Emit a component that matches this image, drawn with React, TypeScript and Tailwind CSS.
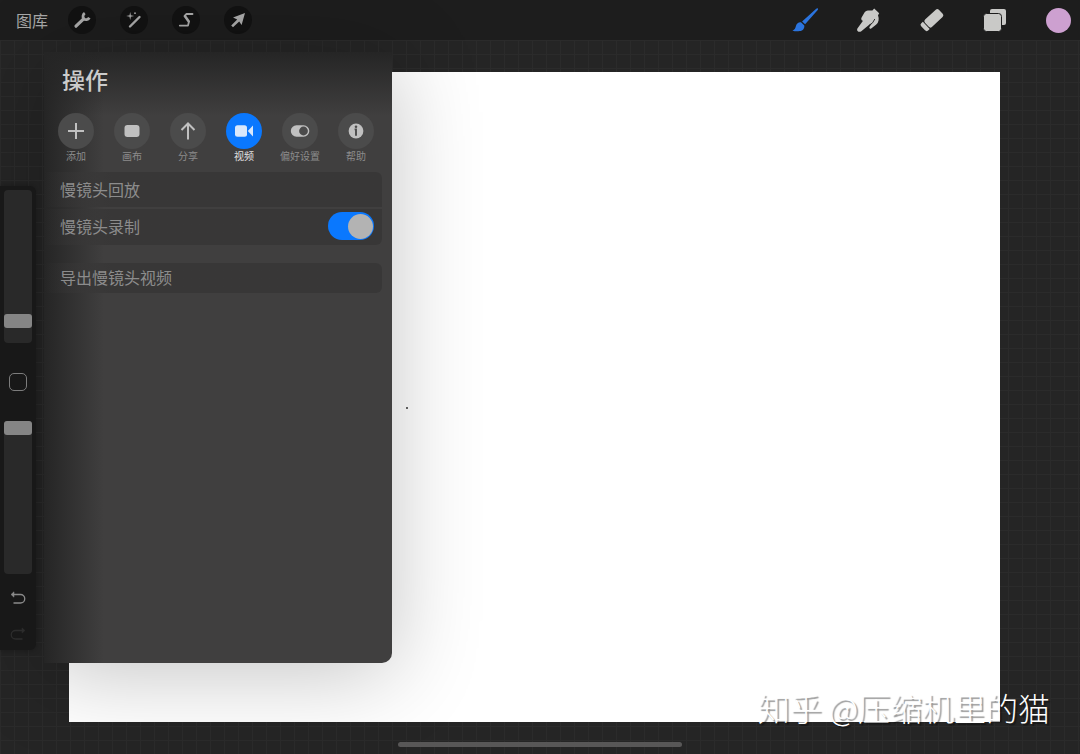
import { useState, type ReactNode } from 'react';

const WrenchIcon = () => (
  <svg viewBox="0 0 20 20" className="h-5 w-5" fill="none" stroke="currentColor">
    <path d="M4 16.2 11.6 8.800" strokeWidth="3.200" strokeLinecap="round" />
    <path d="M12.800 3.200c-2 1.400-2.400 4-1 5.500 1.500 1.500 4.200 1.200 5.600-.9" strokeWidth="2.800" />
  </svg>
);

const WandIcon = () => (
  <svg viewBox="0 0 20 20" className="h-5 w-5" fill="currentColor">
    <path d="M6 16.500 15.500 7" stroke="currentColor" strokeWidth="2.400" strokeLinecap="round" />
    <path d="M6.200 2 6.900 5.300l3.300.7-3.300.7-.7 3.300-.7-3.300L2.200 6l3.300-.7Z" />
    <circle cx="11" cy="3.200" r="0.900" />
  </svg>
);

const SelectIcon = () => (
  <svg viewBox="0 0 20 20" className="h-5 w-5" fill="none" stroke="currentColor" strokeLinecap="round" strokeLinejoin="round">
    <path d="M16.500 4H10.500L8.600 5.800" strokeWidth="1.800" />
    <path d="M9 6.200 12.600 11.200" strokeWidth="2.600" />
    <path d="M13 11.500 12 15.600H3.800" strokeWidth="1.800" />
  </svg>
);

const TransformIcon = () => (
  <svg viewBox="0 0 20 20" className="h-5 w-5" fill="currentColor">
    <path d="M17 3 13.600 15 11.200 11.400 5 17.200 3.200 15.400 9.200 9.400 5 7.600Z" />
  </svg>
);

const BrushIcon = () => (
  <svg viewBox="0 0 28 26" className="h-[26px] w-7" fill="currentColor">
    <path d="M25.800 1.400c.5.500.3.900-.1 1.500L13.100 17.200l-3-2.700L24.200 1.700c.6-.5 1.100-.7 1.600-.3Z" />
    <path d="m9 15.300 3.300 3.100c.4 2.700-1.200 5.200-4.700 5.700-2.800.4-5.400.1-7.200-.7 2.700-.7 2.800-2.200 3.600-4.700.8-2.300 2.700-3.800 5-3.400Z" />
  </svg>
);

const SmudgeIcon = () => (
  <svg viewBox="0 0 26 26" className="h-[26px] w-[26px]" fill="currentColor">
    <path d="M18.200 1.600 23.200 6.200 22 8.200C23.400 12 22.800 15.500 20 17.800L15.200 21.400C13.900 22.200 12.800 21 13.600 19.800L15.800 16.400 13.200 17.800 5 24.400C3 25.800.2 23.800 1.400 21.400L7 13.800C5.400 13.400 4.800 11.800 5.600 10.400L8.200 6C9 4.400 10.400 3.800 12 3.600L16.400 3.600Z" />
    <path d="m13.200 18.200 3.400-2.400 2.200-3.800" fill="none" stroke="#1d1d1d" strokeWidth="0.900" />
  </svg>
);

const EraserIcon = () => (
  <svg viewBox="0 0 26 26" className="h-[26px] w-[26px]" fill="currentColor">
    <g transform="rotate(-43 13 13)">
      <rect x="6" y="8" width="19" height="10" rx="2.200" />
      <path d="M5.200 8v10H3a2.200 2.200 0 0 1-2.200-2.200v-5.600A2.200 2.200 0 0 1 3 8Z" />
    </g>
  </svg>
);

const LayersIcon = () => (
  <svg viewBox="0 0 26 26" className="h-[26px] w-[26px]" fill="currentColor">
    <rect x="8" y="2" width="16" height="16" rx="2" />
    <rect x="1.500" y="6.500" width="18" height="18" rx="3" stroke="#1d1d1d" />
  </svg>
);

const PlusIcon = () => (
  <svg viewBox="0 0 20 20" className="h-5 w-5" stroke="currentColor" strokeWidth="2">
    <path d="M10 2v16M2 10h16" />
  </svg>
);

const CanvasIcon = () => (
  <svg viewBox="0 0 20 20" className="h-5 w-5" fill="currentColor">
    <rect x="2.500" y="4" width="15" height="12" rx="3" />
  </svg>
);

const ShareIcon = () => (
  <svg viewBox="0 0 20 20" className="h-5 w-5" fill="none" stroke="currentColor" strokeWidth="2">
    <path d="M10 18.500V2.500M3.500 9 10 2.500 16.500 9" />
  </svg>
);

const VideoIcon = () => (
  <svg viewBox="0 0 20 20" className="h-5 w-5" fill="currentColor">
    <rect x="1" y="4.300" width="12" height="11.400" rx="2.500" />
    <path d="M13.800 10 19 4.600v10.800Z" />
  </svg>
);

const PrefsIcon = () => (
  <svg viewBox="0 0 20 20" className="h-5 w-5">
    <rect x="0.800" y="4.300" width="18.500" height="11.400" rx="5.700" fill="currentColor" />
    <circle cx="13.500" cy="10" r="4.400" fill="#4b4b4b" />
  </svg>
);

const HelpIcon = () => (
  <svg viewBox="0 0 20 20" className="h-5 w-5">
    <circle cx="10" cy="10" r="7.400" fill="currentColor" />
    <circle cx="10" cy="5.700" r="1.300" fill="#4b4b4b" />
    <path d="M8.600 8.400H10v6.400" stroke="#4b4b4b" strokeWidth="1.900" fill="none" />
  </svg>
);

const UndoIcon = () => (
  <svg viewBox="0 0 16 16" className="h-4 w-4" fill="none" stroke="currentColor" strokeWidth="1.300">
    <path d="M3 4.500h7.500a4 4 0 0 1 0 8.500H3.500" />
    <path d="M4 1.800v5.400L1 4.500Z" fill="currentColor" strokeWidth="0.500" />
  </svg>
);

const TABS: { id: string; label: string; icon: ReactNode }[] = [
  { id: 'add', label: '添加', icon: <PlusIcon /> },
  { id: 'canvas', label: '画布', icon: <CanvasIcon /> },
  { id: 'share', label: '分享', icon: <ShareIcon /> },
  { id: 'video', label: '视频', icon: <VideoIcon /> },
  { id: 'prefs', label: '偏好设置', icon: <PrefsIcon /> },
  { id: 'help', label: '帮助', icon: <HelpIcon /> },
];

const EDIT_TOOLS = [
  { id: 'actions', title: '操作', icon: <WrenchIcon /> },
  { id: 'adjust', title: '调整', icon: <WandIcon /> },
  { id: 'select', title: '选取', icon: <SelectIcon /> },
  { id: 'transform', title: '变换', icon: <TransformIcon /> },
];

const PAINT_TOOLS = [
  { id: 'brush', title: '绘图', icon: <BrushIcon /> },
  { id: 'smudge', title: '涂抹', icon: <SmudgeIcon /> },
  { id: 'erase', title: '擦除', icon: <EraserIcon /> },
  { id: 'layers', title: '图层', icon: <LayersIcon /> },
];

const SLIDER =
  'h-[153px] w-7 cursor-pointer appearance-none rounded-sm bg-[#292929] [direction:rtl] [writing-mode:vertical-lr] [&::-webkit-slider-thumb]:h-3.5 [&::-webkit-slider-thumb]:w-7 [&::-webkit-slider-thumb]:appearance-none [&::-webkit-slider-thumb]:rounded-[3px] [&::-webkit-slider-thumb]:bg-[#858585]';

const ROW = 'bg-linear-to-r from-transparent to-[#383737] to-20% pb-0.5 pl-4';

function TopBar() {
  const [tool, setTool] = useState('brush');

  return (
    <header className="flex h-10 shrink-0 items-center justify-between bg-[#1d1d1d] pr-2 pl-4">
      <div className="flex items-center">
        <button className="mr-5 text-base text-[#a8a8a8]">图库</button>
        <div className="flex items-center gap-6">
          {EDIT_TOOLS.map((t) => (
            <button
              key={t.id}
              aria-label={t.title}
              className="flex h-7 w-7 items-center justify-center rounded-full bg-[#121212] text-[#a8a8a8]"
            >
              {t.icon}
            </button>
          ))}
        </div>
      </div>
      <div className="flex items-center gap-[35px]">
        {PAINT_TOOLS.map((t) => (
          <button
            key={t.id}
            aria-label={t.title}
            onClick={() => setTool(t.id)}
            className={`flex h-7 w-7 items-center justify-center ${tool === t.id ? 'text-[#2b74de]' : 'text-[#c9c9c7]'}`}
          >
            {t.icon}
          </button>
        ))}
        <button aria-label="颜色" className="flex h-7 w-7 items-center justify-center">
          <span className="h-[25px] w-[25px] rounded-full bg-[#cda0d0]" />
        </button>
      </div>
    </header>
  );
}

function SideBar() {
  return (
    <aside className="absolute top-[146px] left-0 flex w-9 flex-col items-center rounded-r-md bg-[#181818] pt-1 pb-2 shadow-[0_0_6px_rgba(0,0,0,0.3)]">
      <input type="range" aria-label="画笔尺寸" defaultValue={11} className={SLIDER} />
      <button aria-label="修改" className="my-[30px] h-[18px] w-[18px] rounded-[5px] border border-[#7c7c7c]" />
      <input type="range" aria-label="不透明度" defaultValue={100} className={SLIDER} />
      <button aria-label="撤销" className="mt-4 text-[#8a8a8a]">
        <UndoIcon />
      </button>
      <button aria-label="重做" className="mt-5 -scale-x-100 text-[#2c2c2c]">
        <UndoIcon />
      </button>
    </aside>
  );
}

function ActionsPanel() {
  const [tab, setTab] = useState('video');
  const [recording, setRecording] = useState(true);

  return (
    <section className="absolute top-3 bottom-[91px] left-11 w-[348px] overflow-hidden rounded-br-[10px] bg-[#403f3f] bg-[linear-gradient(to_right,#252525,transparent_60px),linear-gradient(to_bottom,#252525,transparent_64px)] shadow-[0_10px_90px_rgba(0,0,0,0.24)]">
      <h1 className="px-[18px] pt-2.5 text-[23px] leading-[34px] font-medium text-[#cccccc]">操作</h1>

      <nav className="mt-[17px] flex px-1">
        {TABS.map((t) => (
          <button
            key={t.id}
            onClick={() => setTab(t.id)}
            className={`flex w-14 flex-col items-center text-[10px] leading-[14px] ${tab === t.id ? 'text-[#e0e0e0]' : 'text-[#8c8c8c]'}`}
          >
            <span
              className={`flex h-9 w-9 items-center justify-center rounded-full ${
                tab === t.id ? 'bg-[#0a78fe] text-[#d9e8fb]' : 'bg-[#4b4b4b] text-[#c0c0c0]'
              }`}
            >
              {t.icon}
            </span>
            {t.label}
          </button>
        ))}
      </nav>

      {/* Time-lapse settings */}
      <div className="mt-[9px] mr-2.5 text-base text-[#8c8c8c]">
        <button className={`flex h-[35px] w-full items-center rounded-tr-md ${ROW}`}>慢镜头回放</button>
        <label className={`mt-0.5 flex h-9 items-center justify-between rounded-br-md pr-2 ${ROW}`}>
          慢镜头录制
          <input
            type="checkbox"
            role="switch"
            checked={recording}
            onChange={(e) => setRecording(e.target.checked)}
            className="flex h-7 w-[46px] cursor-pointer appearance-none items-center justify-start rounded-full bg-[#5a5a5a] px-px before:h-[25px] before:w-[25px] before:rounded-full before:bg-[#b3b3b3] checked:justify-end checked:bg-[#0a78fe]"
          />
        </label>
        <button className={`mt-[18px] flex h-[30px] w-full items-center rounded-r-md ${ROW}`}>导出慢镜头视频</button>
      </div>
    </section>
  );
}

export default function App() {
  return (
    <div className="flex min-h-screen flex-col bg-[#252525] font-['Noto_Sans_CJK_SC',sans-serif]">
      <TopBar />
      <main className="relative flex flex-1 bg-[linear-gradient(to_right,#2b2b2b_1px,transparent_1px),linear-gradient(to_bottom,#2b2b2b_1px,transparent_1px)] bg-size-[14px_14px] pt-8 pr-20 pb-8 pl-[69px]">
        <div className="relative flex-1 bg-white">
          {/* stray pen mark */}
          <span className="absolute top-[335px] left-[337px] h-0.5 w-0.5 rounded-full bg-[#333333]" />
        </div>
        <ActionsPanel />
        <SideBar />
        <p className="absolute right-[30px] bottom-[22px] text-[32px] leading-[50px] font-light text-white [text-shadow:2px_2px_1px_rgba(0,0,0,0.4)]">
          知乎 @压缩机里的猫
        </p>
        <div className="absolute bottom-[7px] left-1/2 h-[5px] w-[284px] -translate-x-1/2 rounded-full bg-[#585757]" />
      </main>
    </div>
  );
}
